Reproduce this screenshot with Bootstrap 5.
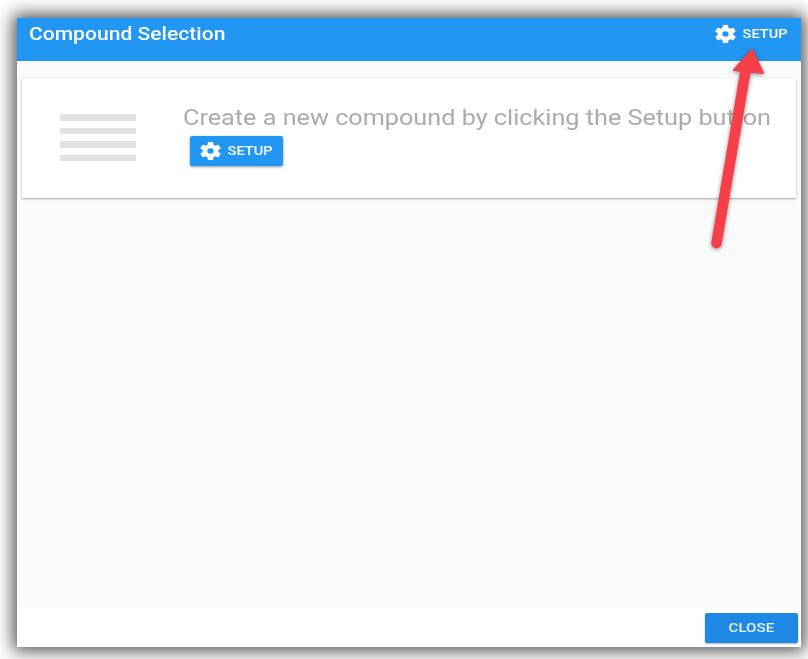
<!DOCTYPE html>
<html lang="en">
<head>
    <meta charset="UTF-8">
    <meta name="viewport" content="width=device-width, initial-scale=1.0">
    <title>Compound Selection</title>
    <link href="https://cdn.jsdelivr.net/npm/bootstrap@5.3.2/dist/css/bootstrap.min.css" rel="stylesheet">
    <style>
        html, body { height: 100%; }
        body { background: #fff; font-family: Roboto, sans-serif; padding: 18px 7px 12px 17px; overflow: hidden; }
        .dlg-window { height: 629px; background: #fff; box-shadow: 0 0 16px 4px rgba(0,0,0,.68); position: relative; }
        .dlg-header { height: 43px; background: #2196f3; color: #fff; padding: 0 13px 0 12px; }
        /* o print original esta esticado na horizontal */
        .dlg-title { font-size: 18.5px; font-weight: 500; margin: 0 0 10px; transform: scaleX(1.14); transform-origin: left center; }
        .dlg-setup { font-size: 13px; font-weight: 500; color: #fff; margin-bottom: 11px; gap: 6px; }
        .dlg-wide { display: inline-block; transform: scaleX(1.12); margin: 0 3px; }
        .dlg-body { height: 546px; background: #fafafa; padding: 17px 5px 0; }
        .dlg-card { height: 120px; background: #fff; box-shadow: 0 1px 2px rgba(0,0,0,.35); padding-left: 38px; }
        .dlg-lines { width: 76px; padding-top: 36px; }
        .dlg-lines span { display: block; height: 6.5px; background: #e2e2e2; margin-bottom: 7px; }
        .dlg-msg { padding: 27px 0 0 47px; }
        .dlg-msg p { font-size: 22px; line-height: 26px; color: #ababab; margin: 0 0 5px; white-space: nowrap; transform: scaleX(1.146); transform-origin: left center; }
        .dlg-btn { width: 93px; height: 30px; margin-left: 7px; background: #2196f3; color: #fff; border-radius: 2px; border: 0; padding: 0; gap: 6px; font-size: 13px; font-weight: 500; box-shadow: 0 1px 3px rgba(0,0,0,.4); }
        .dlg-footer { height: 40px; padding: 6px 3px 0 0; }
        .dlg-close { width: 93px; height: 30px; background: #1e88e5; color: #e3f2fd; border: 0; border-radius: 2px; padding: 0 0 2px; font-size: 13.5px; font-weight: 500; box-shadow: 0 1px 2px rgba(0,0,0,.3); }
        .dlg-gear { fill: #fff; flex: none; }
        .dlg-arrow { position: absolute; left: 680px; top: 30px; filter: drop-shadow(0 1px 2px rgba(0,0,0,.45)); }
    </style>
</head>
<body>
<div class="dlg-window">
    <!-- Barra superior -->
    <div class="dlg-header d-flex align-items-center justify-content-between">
        <h1 class="dlg-title">Compound Selection</h1>
        <div class="dlg-setup d-flex align-items-center">
            <svg class="dlg-gear" width="21" height="18" viewBox="2 2 20 20" preserveAspectRatio="none"><path d="M19.4 13c.04-.32.1-.66.1-1s-.06-.68-.1-1l2.1-1.65c.2-.15.25-.42.13-.64l-2-3.46c-.12-.22-.4-.3-.6-.22l-2.5 1c-.52-.4-1.08-.73-1.7-.98l-.37-2.65A.5.5 0 0 0 14 2h-4a.5.5 0 0 0-.5.42l-.37 2.65c-.62.25-1.18.58-1.7.98l-2.5-1c-.22-.08-.48 0-.6.22l-2 3.46c-.13.22-.07.49.12.64L4.56 11c-.04.32-.06.66-.06 1s.02.68.06 1l-2.1 1.65c-.2.15-.25.42-.13.64l2 3.46c.12.22.4.3.6.22l2.5-1c.52.4 1.08.73 1.7.98l.37 2.65c.04.24.25.4.5.4h4c.25 0 .46-.16.5-.4l.37-2.65c.62-.25 1.18-.58 1.7-.98l2.5 1c.22.08.48 0 .6-.22l2-3.46c.12-.22.07-.49-.12-.64L19.4 13zM12 15a3 3 0 1 1 0-6 3 3 0 0 1 0 6z"/></svg>
            <span class="dlg-wide">SETUP</span>
        </div>
    </div>

    <!-- Conteudo -->
    <div class="dlg-body">
        <div class="dlg-card d-flex">
            <div class="dlg-lines">
                <span></span><span></span><span></span><span></span>
            </div>
            <div class="dlg-msg">
                <p>Create a new compound by clicking the Setup button</p>
                <button type="button" class="dlg-btn d-inline-flex align-items-center justify-content-center">
                    <svg class="dlg-gear" width="21" height="18" viewBox="2 2 20 20" preserveAspectRatio="none"><path d="M19.4 13c.04-.32.1-.66.1-1s-.06-.68-.1-1l2.1-1.65c.2-.15.25-.42.13-.64l-2-3.46c-.12-.22-.4-.3-.6-.22l-2.5 1c-.52-.4-1.08-.73-1.7-.98l-.37-2.65A.5.5 0 0 0 14 2h-4a.5.5 0 0 0-.5.42l-.37 2.65c-.62.25-1.18.58-1.7.98l-2.5-1c-.22-.08-.48 0-.6.22l-2 3.46c-.13.22-.07.49.12.64L4.56 11c-.04.32-.06.66-.06 1s.02.68.06 1l-2.1 1.65c-.2.15-.25.42-.13.64l2 3.46c.12.22.4.3.6.22l2.5-1c.52.4 1.08.73 1.7.98l.37 2.65c.04.24.25.4.5.4h4c.25 0 .46-.16.5-.4l.37-2.65c.62-.25 1.18-.58 1.7-.98l2.5 1c.22.08.48 0 .6-.22l2-3.46c.12-.22.07-.49-.12-.64L19.4 13zM12 15a3 3 0 1 1 0-6 3 3 0 0 1 0 6z"/></svg>
                    <span class="dlg-wide">SETUP</span>
                </button>
            </div>
        </div>
    </div>

    <!-- Rodape -->
    <div class="dlg-footer d-flex justify-content-end">
        <button type="button" class="dlg-close"><span class="dlg-wide">CLOSE</span></button>
    </div>

    <!-- Seta de anotacao -->
    <svg class="dlg-arrow" width="90" height="210" viewBox="0 0 90 210">
        <path d="M55 2 L37 22 L66 25 Z" fill="#f5404a" stroke="#f5404a" stroke-width="2" stroke-linejoin="round"/>
        <line x1="49" y1="20" x2="19.5" y2="195" stroke="#f5404a" stroke-width="10.5" stroke-linecap="round"/>
    </svg>
</div>
<script src="https://cdn.jsdelivr.net/npm/bootstrap@5.3.2/dist/js/bootstrap.bundle.min.js"></script>
</body>
</html>
